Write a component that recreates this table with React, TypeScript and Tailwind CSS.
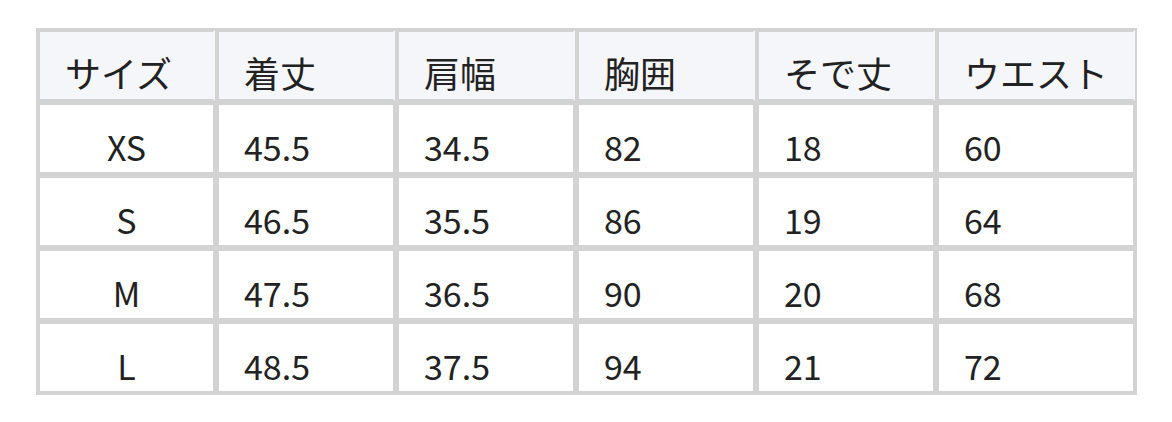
const headers = ['サイズ', '着丈', '肩幅', '胸囲', 'そで丈', 'ウエスト']

const rows = [
  ['XS', '45.5', '34.5', '82', '18', '60'],
  ['S', '46.5', '35.5', '86', '19', '64'],
  ['M', '47.5', '36.5', '90', '20', '68'],
  ['L', '48.5', '37.5', '94', '21', '72'],
]

export default function App() {
  return (
    <div className="min-h-[422px] bg-white pl-[36px] pt-[28px] font-['Noto_Sans_CJK_JP','Noto_Sans',sans-serif] text-[#222]">
      <div className="grid w-[1101px] grid-cols-[177px_178px_178px_178px_178px_198px] gap-[2px] bg-[#d3d3d3] p-[2px]">
        {headers.map((h) => (
          <div
            key={h}
            className="h-[71px] border-2 border-[#d3d3d3] border-r-[#f5f6fa] bg-[#f5f6fa] pl-[25px] pt-[20px] text-[36px] leading-[40px]"
          >
            {h}
          </div>
        ))}
        {rows.map((row) =>
          row.map((cell, i) => (
            <div
              key={row[0] + i}
              className={`h-[71px] border-2 border-[#d3d3d3] bg-white pt-[22px] text-[34px] leading-[40px] ${
                i === 0 ? 'text-center' : 'pl-[25px]'
              }`}
            >
              {cell}
            </div>
          )),
        )}
      </div>
    </div>
  )
}
